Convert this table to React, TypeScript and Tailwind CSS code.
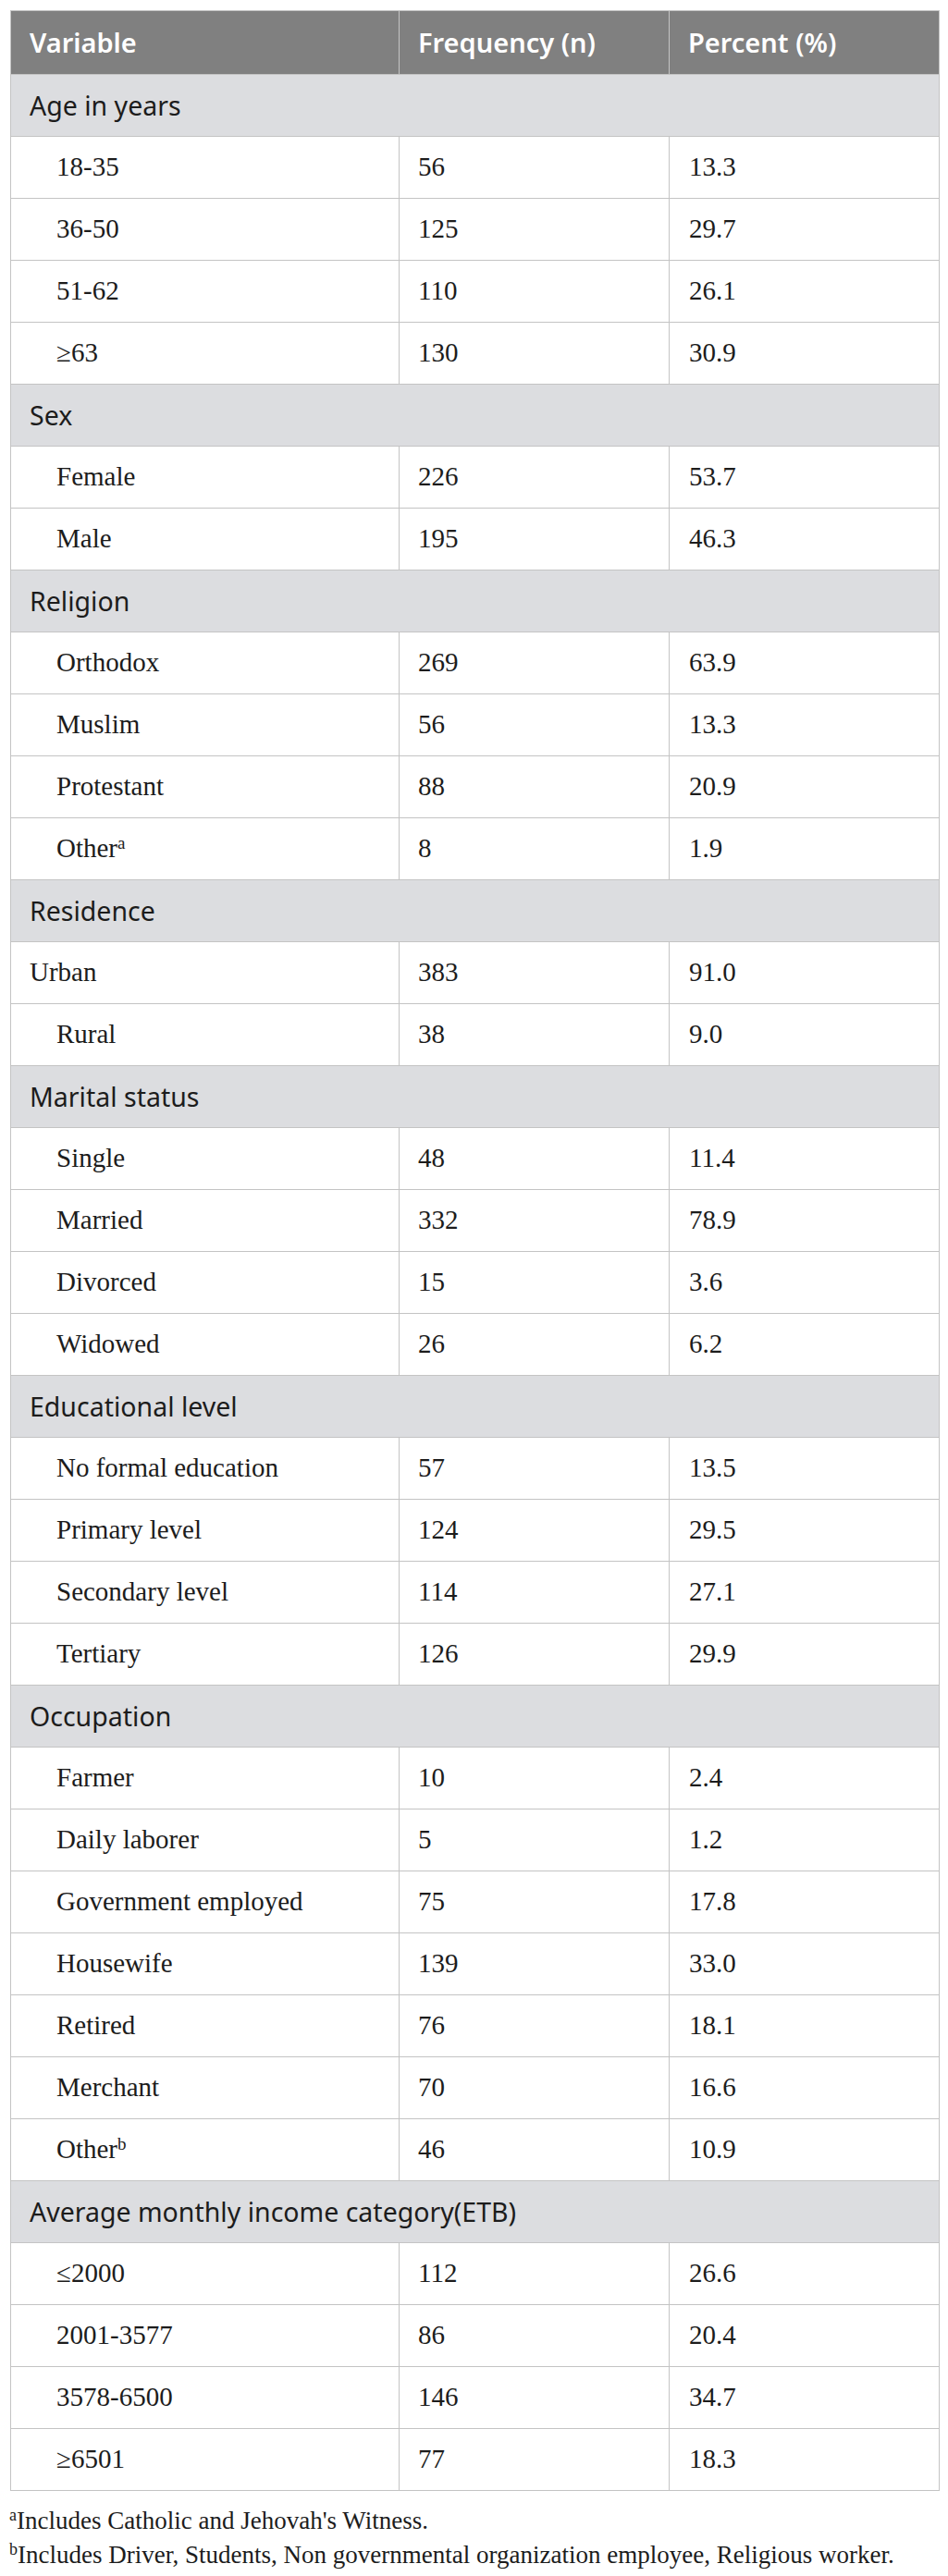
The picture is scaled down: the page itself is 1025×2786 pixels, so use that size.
import React from "react";

type Row =
  | { kind: "section"; label: string }
  | { kind: "data"; label: string; n: string; p: string; indent?: boolean; sup?: string };

const rows: Row[] = [
  { kind: "section", label: "Age in years" },
  { kind: "data", label: "18-35", n: "56", p: "13.3", indent: true },
  { kind: "data", label: "36-50", n: "125", p: "29.7", indent: true },
  { kind: "data", label: "51-62", n: "110", p: "26.1", indent: true },
  { kind: "data", label: "≥63", n: "130", p: "30.9", indent: true },
  { kind: "section", label: "Sex" },
  { kind: "data", label: "Female", n: "226", p: "53.7", indent: true },
  { kind: "data", label: "Male", n: "195", p: "46.3", indent: true },
  { kind: "section", label: "Religion" },
  { kind: "data", label: "Orthodox", n: "269", p: "63.9", indent: true },
  { kind: "data", label: "Muslim", n: "56", p: "13.3", indent: true },
  { kind: "data", label: "Protestant", n: "88", p: "20.9", indent: true },
  { kind: "data", label: "Other", n: "8", p: "1.9", indent: true, sup: "a" },
  { kind: "section", label: "Residence" },
  { kind: "data", label: "Urban", n: "383", p: "91.0" },
  { kind: "data", label: "Rural", n: "38", p: "9.0", indent: true },
  { kind: "section", label: "Marital status" },
  { kind: "data", label: "Single", n: "48", p: "11.4", indent: true },
  { kind: "data", label: "Married", n: "332", p: "78.9", indent: true },
  { kind: "data", label: "Divorced", n: "15", p: "3.6", indent: true },
  { kind: "data", label: "Widowed", n: "26", p: "6.2", indent: true },
  { kind: "section", label: "Educational level" },
  { kind: "data", label: "No formal education", n: "57", p: "13.5", indent: true },
  { kind: "data", label: "Primary level", n: "124", p: "29.5", indent: true },
  { kind: "data", label: "Secondary level", n: "114", p: "27.1", indent: true },
  { kind: "data", label: "Tertiary", n: "126", p: "29.9", indent: true },
  { kind: "section", label: "Occupation" },
  { kind: "data", label: "Farmer", n: "10", p: "2.4", indent: true },
  { kind: "data", label: "Daily laborer", n: "5", p: "1.2", indent: true },
  { kind: "data", label: "Government employed", n: "75", p: "17.8", indent: true },
  { kind: "data", label: "Housewife", n: "139", p: "33.0", indent: true },
  { kind: "data", label: "Retired", n: "76", p: "18.1", indent: true },
  { kind: "data", label: "Merchant", n: "70", p: "16.6", indent: true },
  { kind: "data", label: "Other", n: "46", p: "10.9", indent: true, sup: "b" },
  { kind: "section", label: "Average monthly income category(ETB)" },
  { kind: "data", label: "≤2000", n: "112", p: "26.6", indent: true },
  { kind: "data", label: "2001-3577", n: "86", p: "20.4", indent: true },
  { kind: "data", label: "3578-6500", n: "146", p: "34.7", indent: true },
  { kind: "data", label: "≥6501", n: "77", p: "18.3", indent: true },
];

const sans = "font-['Noto_Sans',sans-serif]";
const serif = "font-['Liberation_Serif',serif]";

export default function App() {
  return (
    <div className="bg-white w-[1025px] min-h-[2786px] pt-[11px] pl-[11px]">
      <table className="border-collapse w-[1004px] table-fixed">
        <colgroup>
          <col className="w-[420px]" />
          <col className="w-[292px]" />
          <col className="w-[292px]" />
        </colgroup>
        <thead>
          <tr className="h-[69px] bg-[#808080]">
            <th className={`border border-[#c4c4c4] text-left align-middle pl-[20px] text-white font-semibold text-[29px] ${sans}`}>Variable</th>
            <th className={`border border-[#c4c4c4] text-left align-middle pl-[20px] text-white font-semibold text-[29px] ${sans}`}>Frequency (n)</th>
            <th className={`border border-[#c4c4c4] text-left align-middle pl-[20px] text-white font-semibold text-[29px] ${sans}`}>Percent (%)</th>
          </tr>
        </thead>
        <tbody>
          {rows.map((r, i) =>
            r.kind === "section" ? (
              <tr key={i} className="h-[67px] bg-[#dcdde0]">
                <td colSpan={3} className={`border border-[#c4c4c4] pl-[20px] align-middle text-[#1c1c1c] text-[28.5px] ${sans}`}>
                  {r.label}
                </td>
              </tr>
            ) : (
              <tr key={i} className="h-[67px] bg-white">
                <td className={`border border-[#c4c4c4] align-middle text-[#1c1c1c] text-[29px] ${serif} ${r.indent ? "pl-[49px]" : "pl-[20px]"}`}>
                  {r.label}
                  {r.sup && <sup className="text-[19px] leading-none">{r.sup}</sup>}
                </td>
                <td className={`border border-[#c4c4c4] align-middle pl-[20px] text-[#1c1c1c] text-[29px] ${serif}`}>{r.n}</td>
                <td className={`border border-[#c4c4c4] align-middle pl-[21px] text-[#1c1c1c] text-[29px] ${serif}`}>{r.p}</td>
              </tr>
            )
          )}
        </tbody>
      </table>
      <div className={`pt-[14px] text-[27px] leading-[37px] text-[#1c1c1c] ${serif}`}>
        <p className="-ml-[1px]">
          <sup className="text-[18px] leading-none">a</sup>Includes Catholic and Jehovah's Witness.
        </p>
        <p className="-ml-[1px]">
          <sup className="text-[18px] leading-none">b</sup>Includes Driver, Students, Non governmental organization employee, Religious worker.
        </p>
      </div>
    </div>
  );
}
